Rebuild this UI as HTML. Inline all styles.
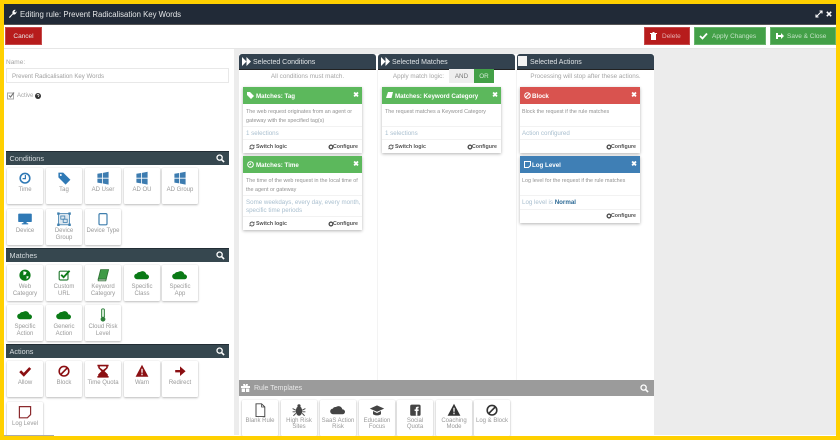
<!DOCTYPE html>
<html><head><meta charset="utf-8"><title>Editing rule</title>
<style>
html,body{margin:0;padding:0;background:#fff}
#p{position:relative;width:840px;height:440px;overflow:hidden;background:#fff;font-family:"Liberation Sans",sans-serif;color:#777}
#p div,#p svg{position:absolute}
.t{width:36px;height:36px;background:#fff;box-shadow:0 1px 2px rgba(0,0,0,.25),0 0 1px rgba(0,0,0,.15);border-radius:1px}
.t svg{left:10px;top:3px;width:16px;height:14.4px}
.l{left:-3px;width:42px;top:19px;text-align:center;font-size:6px;line-height:6.8px;color:#999}
.q .l{top:18px}
.h{background:#36474f;border-top:1px solid #222d35;height:13px;color:#d8dde0;font-size:7.3px;line-height:13px;text-indent:3.5px}
.sh{background:#33424f;height:15px;border-radius:3px 3px 0 0;color:#dfe3e6;font-size:7px;line-height:17px;text-indent:14px;border-bottom:1px solid #222}
.sub{top:72px;text-align:center;font-size:6.3px;color:#a5a5a5;line-height:10px}
.c{background:#fff;box-shadow:0 1px 3px rgba(0,0,0,.3);width:119px}
.ch{left:0;top:0;width:119px;height:17px;color:#fff;font-size:6.2px;font-weight:bold;line-height:19px;text-indent:13px}
.x{right:3px;top:0;color:#fff;font-size:7px;font-weight:bold;line-height:17px}
.d{left:3px;top:21px;width:114px;font-size:5.4px;line-height:8.7px;color:#929292}
.s{left:3px;top:42.5px;font-size:6.2px;line-height:8.7px;color:#a9bfcf;white-space:nowrap}
.r{left:0;width:119px;height:1px;background:#f2f2f2}
.f{font-size:5.3px;font-weight:bold;color:#555;line-height:8px;white-space:nowrap}
.b{height:18px;color:#e8e8e8;font-size:6.5px;line-height:18px;text-align:left;border:1px solid rgba(255,255,255,.2);box-sizing:border-box}
.mag{width:9px;height:9px}
</style></head><body><div id="p">
<svg width="0" height="0"><defs>
<symbol id="win" viewBox="0 0 20 18"><path d="M3 3.500l6-1v6H3zM10 2.300l7-1.300v7.500h-7zM3 9.500h6v6l-6-1zM10 9.500h7V17l-7-1.300z" fill="#3d7cb0"/></symbol>
<symbol id="cloud" viewBox="0 0 20 18"><path d="M4 14a3.500 3.500 0 0 1-.5-7 4 4 0 0 1 4-2 5 5 0 0 1 8 3 3 3 0 0 1 .5 6z" fill="currentColor"/></symbol>
<symbol id="mag" viewBox="0 0 10 10"><circle cx="4" cy="4" r="2.900" fill="none" stroke="#fff" stroke-width="1.400"/><path d="M6.200 6.200L9 9" stroke="#fff" stroke-width="1.800"/></symbol>
<symbol id="ff" viewBox="0 0 10 10"><path d="M0 0l5 5-5 5zM5 0l5 5-5 5z" fill="#fff"/></symbol>
<symbol id="gear" viewBox="0 0 6 6"><circle cx="3" cy="3" r="1.700" fill="none" stroke="#555" stroke-width="1.100"/><path d="M3 0v1M3 5v1M0 3h1M5 3h1M1 1l.7.7M5 1l-.7.7M1 5l.7-.7M5 5l-.7-.7" stroke="#555" stroke-width=".8"/></symbol>
<symbol id="sw" viewBox="0 0 6 6"><path d="M1 3a2 2 0 0 1 3.500-1.300M5 3a2 2 0 0 1-3.500 1.300" fill="none" stroke="#555" stroke-width=".9"/><path d="M5.500.5v2h-2zM.5 5.500v-2h2z" fill="#555"/></symbol>
</defs></svg>

<div style="left:4px;top:4px;width:832px;height:20px;background:#212a37;border-bottom:1px solid #555"></div>
<svg style="left:8px;top:9px" width="9" height="9" viewBox="0 0 10 10"><path d="M1 9l4-4a3 3 0 0 1 3.500-4L7 3l1 1 1.500-1.500A3 3 0 0 1 5.500 6l-3.500 4z" fill="#fff"/></svg>
<div style="left:20px;top:9px;font-size:7.8px;line-height:11px;color:#e4e6e8;white-space:nowrap">Editing rule: Prevent Radicalisation Key Words</div>
<svg style="left:815px;top:10px" width="8" height="8" viewBox="0 0 8 8"><path d="M1 7l6-6M4.500 1H7v2.500M1 4.500V7h2.500" stroke="#fff" stroke-width="1.100" fill="none"/></svg>
<svg style="left:826px;top:11px" width="6" height="6" viewBox="0 0 6 6"><path d="M.8.800l4.400 4.400M5.200.800L.8 5.200" stroke="#fff" stroke-width="1.500"/></svg>

<div class="b" style="left:5px;top:27px;width:37px;background:#b71c1c;text-align:center">Cancel</div>
<div class="b" style="left:644px;top:27px;width:46px;background:#b71c1c;text-indent:17px;color:#e4b0b0">Delete</div>
<svg style="left:650px;top:32px" width="7" height="8" viewBox="0 0 7 8"><path d="M1 2h5v6H1zM0 1h7v1H0zM2.500 0h2v1h-2z" fill="#fff"/></svg>
<div class="b" style="left:694px;top:27px;width:72px;background:#43a047;text-indent:17px;color:#c4e3c6">Apply Changes</div>
<svg style="left:699px;top:32px" width="9" height="8" viewBox="0 0 9 8"><path d="M1 4l2.500 2.500L8 1.500" stroke="#fff" stroke-width="1.800" fill="none"/></svg>
<div class="b" style="left:770px;top:27px;width:66px;background:#43a047;text-indent:16px;color:#c4e3c6">Save &amp; Close</div>
<svg style="left:775px;top:32px" width="9" height="8" viewBox="0 0 9 8"><path d="M3 1H1v6h2M3 3h3V1l3 3-3 3V5H3z" fill="#fff"/></svg>

<div style="left:4px;top:48px;width:832px;height:1px;background:#e6e6e6"></div>
<div style="left:234px;top:49px;width:602px;height:386px;background:#ececec"></div>

<!-- Left -->
<div style="left:6px;top:58px;font-size:6.5px;line-height:9px;color:#a5a5a5">Name:</div>
<div style="left:6px;top:68px;width:223px;height:15px;box-sizing:border-box;border:1px solid #e8e8e8;font-size:6.1px;line-height:16px;text-indent:5px;color:#a0a0a0">Prevent Radicalisation Key Words</div>
<svg style="left:6px;top:91px" width="9" height="9" viewBox="0 0 9 9"><rect x="1.500" y="2" width="6" height="6" fill="#fff" stroke="#aaa"/><path d="M3 4.500l1.500 1.500L8 1.500" stroke="#777" stroke-width="1.100" fill="none"/></svg>
<div style="left:17px;top:92px;font-size:6px;line-height:9px;color:#a5a5a5">Active</div>
<svg style="left:35px;top:93px" width="6" height="6" viewBox="0 0 6 6"><circle cx="3" cy="3" r="3" fill="#333"/><path d="M2 2.300a1 1 0 1 1 1.300 1V4" stroke="#fff" stroke-width=".7" fill="none"/></svg>

<div class="h" style="left:6px;top:151px;width:223px">Conditions</div>
<svg class="mag" style="left:216px;top:154px"><use href="#mag"/></svg>
<div class="t" style="left:7px;top:168px"><svg viewBox="0 0 20 18"><circle cx="10" cy="9" r="6" fill="#fff" stroke="#2f79b5" stroke-width="2"/><path d="M10.500 5v4.500H7" stroke="#2f79b5" stroke-width="1.500" fill="none"/></svg><div class="l">Time</div></div>
<div class="t" style="left:46px;top:168px"><svg viewBox="0 0 20 18"><path d="M3 2h6l9 9-6 6-9-9z" fill="#2f79b5"/><circle cx="6" cy="5" r="1.200" fill="#fff"/></svg><div class="l">Tag</div></div>
<div class="t" style="left:85px;top:168px"><svg><use href="#win"/></svg><div class="l">AD User</div></div>
<div class="t" style="left:124px;top:168px"><svg><use href="#win"/></svg><div class="l">AD OU</div></div>
<div class="t" style="left:162px;top:168px"><svg><use href="#win"/></svg><div class="l">AD Group</div></div>
<div class="t" style="left:7px;top:209px"><svg viewBox="0 0 20 18"><rect x="1.500" y="2" width="17" height="10.500" rx="1" fill="#2f79b5"/><path d="M8 12h4v2H8zM6 14h8v1.500H6z" fill="#2f79b5"/></svg><div class="l">Device</div></div>
<div class="t" style="left:46px;top:209px"><svg viewBox="0 0 20 18"><rect x="3" y="2" width="14" height="14" fill="#dce7f0" stroke="#3f7fae"/><rect x="1.500" y=".5" width="3" height="3" fill="#3f7fae"/><rect x="15.500" y=".5" width="3" height="3" fill="#3f7fae"/><rect x="1.500" y="14.500" width="3" height="3" fill="#3f7fae"/><rect x="15.500" y="14.500" width="3" height="3" fill="#3f7fae"/><rect x="6" y="5" width="5" height="4" fill="none" stroke="#3f7fae"/><rect x="9" y="9" width="5" height="4" fill="none" stroke="#3f7fae"/></svg><div class="l">Device<br>Group</div></div>
<div class="t" style="left:85px;top:209px"><svg viewBox="0 0 20 18"><rect x="5" y="2" width="10" height="14" rx="1.500" fill="#fff" stroke="#3f7fae" stroke-width="1.500"/></svg><div class="l">Device Type</div></div>

<div class="h" style="left:6px;top:248px;width:223px">Matches</div>
<svg class="mag" style="left:216px;top:251px"><use href="#mag"/></svg>
<div class="t" style="left:7px;top:265px;color:#0a7a16"><svg viewBox="0 0 20 18"><circle cx="10" cy="9" r="7" fill="#0a7a16"/><path d="M8 4l4 1-1 3-3 1zM12 10l3 1-3 3z" fill="#fff"/></svg><div class="l">Web<br>Category</div></div>
<div class="t" style="left:46px;top:265px"><svg viewBox="0 0 20 18"><rect x="4" y="4" width="11" height="11" rx="1.500" fill="#fff" stroke="#2d7f3a" stroke-width="1.500"/><path d="M6.500 8.500l3 3L17 3.500" stroke="#0a7a16" stroke-width="2.300" fill="none"/></svg><div class="l">Custom<br>URL</div></div>
<div class="t" style="left:85px;top:265px"><svg viewBox="0 0 20 18"><path d="M7 2h10l-3 12H4z" fill="#3f9a46" stroke="#2a6e31"/><path d="M4 14h10l-.5 2H4z" fill="#fff" stroke="#2a6e31"/></svg><div class="l">Keyword<br>Category</div></div>
<div class="t" style="left:124px;top:265px;color:#0a7a16"><svg><use href="#cloud"/></svg><div class="l">Specific<br>Class</div></div>
<div class="t" style="left:162px;top:265px;color:#0a7a16"><svg><use href="#cloud"/></svg><div class="l">Specific<br>App</div></div>
<div class="t" style="left:7px;top:305px;color:#0a7a16"><svg><use href="#cloud"/></svg><div class="l">Specific<br>Action</div></div>
<div class="t" style="left:46px;top:305px;color:#0a7a16"><svg><use href="#cloud"/></svg><div class="l">Generic<br>Action</div></div>
<div class="t" style="left:85px;top:305px"><svg viewBox="0 0 20 18"><rect x="8" y="1" width="4" height="11" rx="2" fill="#cfe6d0" stroke="#2d7f3a"/><circle cx="10" cy="14" r="3" fill="#2d7f3a"/></svg><div class="l">Cloud Risk<br>Level</div></div>

<div class="h" style="left:6px;top:344px;width:223px">Actions</div>
<svg class="mag" style="left:216px;top:347px"><use href="#mag"/></svg>
<div class="t" style="left:7px;top:361px"><svg viewBox="0 0 20 18"><path d="M4 9l4.500 4.500L16.500 5" stroke="#8b0f12" stroke-width="3.400" fill="none"/></svg><div class="l">Allow</div></div>
<div class="t" style="left:46px;top:361px"><svg viewBox="0 0 20 18"><circle cx="10" cy="9" r="6" fill="none" stroke="#8b0f12" stroke-width="2"/><path d="M6 13l8-8" stroke="#8b0f12" stroke-width="2"/></svg><div class="l">Block</div></div>
<div class="t" style="left:85px;top:361px"><svg viewBox="0 0 20 18"><path d="M3 1h14v2h-1v2l-4 4 4 4v2h1v2H3v-2h1v-2l4-4-4-4V3H3z" fill="#8b0f12"/><path d="M6 3h8v1.500l-4 3-4-3z" fill="#fff"/></svg><div class="l">Time Quota</div></div>
<div class="t" style="left:124px;top:361px"><svg viewBox="0 0 20 18"><path d="M10 1l8 15H2z" fill="#8b0f12"/><path d="M9.200 6h1.600v5H9.200zM9.200 12h1.600v2H9.200z" fill="#fff"/></svg><div class="l">Warn</div></div>
<div class="t" style="left:162px;top:361px"><svg viewBox="0 0 20 18"><path d="M4 7.500h6V3l7 6-7 6v-4.500H4z" fill="#8b0f12"/></svg><div class="l">Redirect</div></div>
<div class="t" style="left:7px;top:402px"><svg viewBox="0 0 20 18"><path d="M3 2h14v10l-4 4H3z" fill="#fff" stroke="#8b2a2d" stroke-width="1.500"/></svg><div class="l">Log Level</div></div>

<!-- Columns -->
<div style="left:239px;top:54px;width:415px;height:326px;background:#fff"></div>
<div style="left:377px;top:70px;width:1px;height:310px;background:#f3f3f3"></div>
<div style="left:516px;top:70px;width:1px;height:310px;background:#f3f3f3"></div>
<div class="sh" style="left:239px;top:54px;width:137px">Selected Conditions</div>
<svg style="left:242px;top:57px" width="9" height="9"><use href="#ff"/></svg>
<div class="sh" style="left:378px;top:54px;width:137px">Selected Matches</div>
<svg style="left:381px;top:57px" width="9" height="9"><use href="#ff"/></svg>
<div class="sh" style="left:517px;top:54px;width:137px;text-indent:13px">Selected Actions</div>
<div style="left:518px;top:56px;width:9px;height:10px;background:#f2f2f2"></div>

<div class="sub" style="left:239px;width:137px">All conditions must match.</div>
<div class="sub" style="left:378px;width:66px;text-align:right">Apply match logic:</div>
<div style="left:449px;top:69px;width:25px;height:14px;background:#eee;font-size:6.3px;line-height:16px;text-align:center;color:#777">AND</div>
<div style="left:474px;top:69px;width:20px;height:14px;background:#43a047;font-size:6.3px;line-height:16px;text-align:center;color:#d5ecd6">OR</div>
<div class="sub" style="left:517px;width:137px">Processing will stop after these actions.</div>

<!-- Cards -->
<div class="c" style="left:243px;top:87px;height:66px"><div class="ch" style="background:#5cb85c">Matches: Tag</div><div class="x">✖</div>
<svg style="left:4px;top:5px" width="7" height="7" viewBox="0 0 7 7"><path d="M0 0h3l4 4-3 3-4-4z" fill="#fff"/></svg>
<div class="d">The web request originates from an agent or gateway with the specified tag(s)</div><div class="r" style="top:39px"></div>
<div class="s">1 selections</div><div class="r" style="top:52px"></div>
<svg style="left:6px;top:57px" width="6" height="6"><use href="#sw"/></svg><div class="f" style="left:13px;top:56px">Switch logic</div>
<svg style="left:85px;top:57px" width="6" height="6"><use href="#gear"/></svg><div class="f" style="right:4px;top:56px">Configure</div></div>

<div class="c" style="left:243px;top:156px;height:74px"><div class="ch" style="background:#5cb85c">Matches: Time</div><div class="x">✖</div>
<svg style="left:4px;top:5px" width="7" height="7" viewBox="0 0 7 7"><circle cx="3.500" cy="3.500" r="2.800" fill="none" stroke="#fff"/><path d="M3.500 2v1.500H2" stroke="#fff" fill="none" stroke-width=".7"/></svg>
<div class="d">The time of the web request in the local time of the agent or gateway</div><div class="r" style="top:39px"></div>
<div class="s" style="white-space:normal;width:118px">Some weekdays, every day, every month, specific time periods</div><div class="r" style="top:60px"></div>
<svg style="left:6px;top:65px" width="6" height="6"><use href="#sw"/></svg><div class="f" style="left:13px;top:64px">Switch logic</div>
<svg style="left:85px;top:65px" width="6" height="6"><use href="#gear"/></svg><div class="f" style="right:4px;top:64px">Configure</div></div>

<div class="c" style="left:382px;top:87px;height:66px"><div class="ch" style="background:#5cb85c">Matches: Keyword Category</div><div class="x">✖</div>
<svg style="left:4px;top:5px" width="7" height="7" viewBox="0 0 7 7"><path d="M2 0h5L5.500 6H0z" fill="#fff"/></svg>
<div class="d">The request matches a Keyword Category</div><div class="r" style="top:39px"></div>
<div class="s">1 selections</div><div class="r" style="top:52px"></div>
<svg style="left:6px;top:57px" width="6" height="6"><use href="#sw"/></svg><div class="f" style="left:13px;top:56px">Switch logic</div>
<svg style="left:85px;top:57px" width="6" height="6"><use href="#gear"/></svg><div class="f" style="right:4px;top:56px">Configure</div></div>

<div class="c" style="left:520px;top:87px;height:66px;width:120px"><div class="ch" style="background:#d9534f;width:120px;text-indent:12px">Block</div><div class="x">✖</div>
<svg style="left:4px;top:5px" width="7" height="7" viewBox="0 0 7 7"><circle cx="3.500" cy="3.500" r="2.800" fill="none" stroke="#fff"/><path d="M1.500 5.500l4-4" stroke="#fff"/></svg>
<div class="d" style="left:2px">Block the request if the rule matches</div><div class="r" style="top:39px;width:120px"></div>
<div class="s" style="left:2px">Action configured</div><div class="r" style="top:52px;width:120px"></div>
<svg style="left:86px;top:57px" width="6" height="6"><use href="#gear"/></svg><div class="f" style="right:4px;top:56px">Configure</div></div>

<div class="c" style="left:520px;top:156px;height:67px;width:120px"><div class="ch" style="background:#3f7fb5;width:120px;text-indent:12px">Log Level</div><div class="x">✖</div>
<svg style="left:4px;top:5px" width="7" height="7" viewBox="0 0 7 7"><path d="M.5.500h6v4l-2 2h-4z" fill="none" stroke="#fff"/></svg>
<div class="d" style="left:2px">Log level for the request if the rule matches</div><div class="r" style="top:39px;width:120px"></div>
<div class="s" style="left:2px">Log level is <b style="color:#2d6a96">Normal</b></div><div class="r" style="top:53px;width:120px"></div>
<svg style="left:86px;top:57px" width="6" height="6"><use href="#gear"/></svg><div class="f" style="right:4px;top:56px">Configure</div></div>

<!-- Templates -->
<div style="left:239px;top:380px;width:415px;height:16px;background:#9b9b9b;color:#e8e8e8;font-size:7px;line-height:18px;text-indent:15px">Rule Templates</div>
<svg style="left:241px;top:384px" width="9" height="8" viewBox="0 0 9 8"><path d="M0 2h9v2H0zM.7 4.500h3.300V8H.7zM5 4.500h3.300V8H5zM2 0h2l.5 2h-2zM7 0H5l-.5 2h2z" fill="#fff"/></svg>
<svg class="mag" style="left:640px;top:384px"><use href="#mag"/></svg>
<div style="left:239px;top:396px;width:415px;height:40px;background:#fff"></div>
<div class="t q" style="left:242px;top:399.500px"><svg viewBox="0 0 20 18"><path d="M5 1h7l4 4v12H5z" fill="#fff" stroke="#444" stroke-width="1.200"/><path d="M12 1v4h4" fill="none" stroke="#444"/></svg><div class="l">Blank Rule</div></div>
<div class="t q" style="left:281px;top:399.500px"><svg viewBox="0 0 20 18"><ellipse cx="10" cy="10" rx="4" ry="6" fill="#444"/><circle cx="10" cy="3.500" r="2" fill="#444"/><path d="M2 7l4 2M18 7l-4 2M2 11h4M18 11h-4M3 16l3-3M17 16l-3-3" stroke="#444" stroke-width="1.200"/></svg><div class="l">High Risk<br>Sites</div></div>
<div class="t q" style="left:320px;top:399.500px;color:#444"><svg><use href="#cloud"/></svg><div class="l">SaaS Action<br>Risk</div></div>
<div class="t q" style="left:359px;top:399.500px"><svg viewBox="0 0 20 18"><path d="M10 3l9 4-9 4-9-4z" fill="#444"/><path d="M5 10v4c3 2 7 2 10 0v-4l-5 2.500z" fill="#444"/></svg><div class="l">Education<br>Focus</div></div>
<div class="t q" style="left:397px;top:399.500px"><svg viewBox="0 0 20 18"><rect x="4" y="2" width="13" height="14" rx="2" fill="#444"/><path d="M11 16V10H9.500V8H11V6.500C11 5 12 4.500 14.500 4.500v2c-1 0-1.500 0-1.500 1V8h1.500v2H13v6z" fill="#fff"/></svg><div class="l">Social<br>Quota</div></div>
<div class="t q" style="left:436px;top:399.500px"><svg viewBox="0 0 20 18"><path d="M10 1l8 15H2z" fill="#333"/><path d="M9.200 6h1.600v5H9.200zM9.200 12h1.600v2H9.200z" fill="#fff"/></svg><div class="l">Coaching<br>Mode</div></div>
<div class="t q" style="left:474px;top:399.500px"><svg viewBox="0 0 20 18"><circle cx="10" cy="9" r="6" fill="none" stroke="#333" stroke-width="2"/><path d="M6 13l8-8" stroke="#333" stroke-width="2"/></svg><div class="l">Log &amp; Block</div></div>

<div style="left:4px;top:435px;width:50px;height:1px;background:#aaa"></div>
<!-- Yellow frame -->
<div style="left:0;top:0;width:840px;height:4px;background:#ffd000"></div>
<div style="left:0;top:0;width:4px;height:440px;background:#ffd000"></div>
<div style="left:836px;top:0;width:4px;height:440px;background:#ffd000"></div>
<div style="left:0;top:436px;width:840px;height:4px;background:#ffd000"></div>
</div></body></html>
